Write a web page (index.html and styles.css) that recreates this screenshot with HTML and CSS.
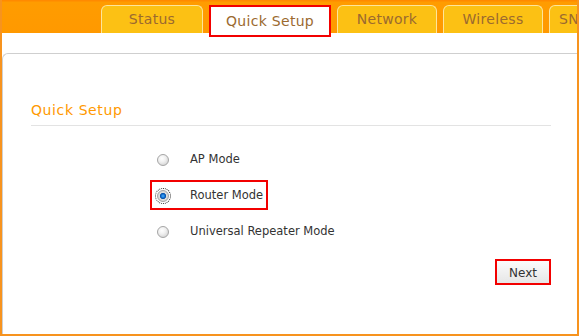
FILE: index.html
```html
<!DOCTYPE html>
<html lang="en">
<head>
    <meta charset="UTF-8">
    <meta name="viewport" content="width=device-width, initial-scale=1.0">
    <title>Quick Setup</title>
    <link rel="stylesheet" href="styles.css">
</head>
<body>
    <div class="frame">
        <div class="header">
            <div class="tab">Status</div>
            <div class="tab tab-active">Quick Setup</div>
            <div class="tab">Network</div>
            <div class="tab">Wireless</div>
            <div class="tab tab-more">SNMP</div>
        </div>

        <div class="content">
            <div class="panel">
                <h2 class="panel-title">Quick Setup</h2>

                <div class="options">
                    <label class="option">
                        <input type="radio" name="mode" value="ap">
                        <span>AP Mode</span>
                    </label>
                    <label class="option option-marked">
                        <input type="radio" name="mode" value="router" checked>
                        <span>Router Mode</span>
                    </label>
                    <label class="option">
                        <input type="radio" name="mode" value="repeater">
                        <span>Universal Repeater Mode</span>
                    </label>
                </div>

                <div class="actions">
                    <button class="next-btn">Next</button>
                </div>
            </div>
        </div>
    </div>
</body>
</html>
```

FILE: styles.css
```css
* {
    margin: 0;
    padding: 0;
    box-sizing: border-box;
    font-family: 'DejaVu Sans', Verdana, sans-serif;
}

body {
    background-color: white;
}

.frame {
    width: 579px;
    height: 336px;
    border-left: 2px solid #f7931e;
    border-right: 2px solid #f7931e;
    border-bottom: 2px solid #f7931e;
    overflow: hidden;
}

.header {
    height: 33px;
    margin-left: -2px;
    background: linear-gradient(#ff8a00 0, #ff8a00 1px, #ff9c00 2px, #ff9900 100%);
    display: flex;
    align-items: flex-start;
    gap: 6px;
    padding: 5px 0 0 101px;
    position: relative;
    z-index: 2;
}

.tab {
    flex: none;
    width: 100px;
    height: 28px;
    background-color: #fcc114;
    border: 1px solid #fde59b;
    border-bottom: none;
    border-radius: 6px 6px 0 0;
    color: #9b6a30;
    font-size: 14px;
    line-height: 27px;
    text-align: center;
    letter-spacing: 0.3px;
}

.tab:first-child {
    width: 102px;
}

.tab-active {
    width: 122px;
    height: 32px;
    background-color: white;
    border: 2px solid #f20000;
    border-radius: 0;
    line-height: 28px;
}

.tab-more {
    text-align: left;
    padding-left: 9px;
}

.content {
    padding-top: 20px;
}

.panel {
    height: 281px;
    border-top: 1px solid #cfcfcf;
    border-left: 1px solid #cfcfcf;
    border-top-left-radius: 6px;
}

.panel-title {
    margin: 47px 26px 0 28px;
    padding-bottom: 6px;
    border-bottom: 1px solid #e3e3e3;
    color: #ff9900;
    font-size: 14px;
    font-weight: normal;
    line-height: 18px;
    letter-spacing: 0.6px;
}

.options {
    margin-top: 18px;
    display: flex;
    flex-direction: column;
    gap: 6px;
}

.option {
    display: flex;
    align-items: center;
    width: fit-content;
    margin-left: 147px;
    padding: 5px 3px 5px 5px;
    border: 2px solid transparent;
    color: #333;
    font-size: 11.5px;
    line-height: 16px;
}

.option-marked {
    border-color: #f20000;
}

.option input {
    appearance: none;
    width: 12px;
    height: 12px;
    margin-right: 21px;
    margin-top: 2px;
    border: 1px solid #a5a5a5;
    border-radius: 50%;
    background: radial-gradient(circle at 40% 35%, #ffffff 0, #f0f0f0 40%, #c8c8c8 100%);
}

.option input:checked {
    background: radial-gradient(circle, #4db3ff 0, #0a64c8 30%, #0a4f9e 40%, #e0e0e0 45%, #c8c8c8 100%);
    outline: 1px dotted #222;
    outline-offset: 1px;
}

.actions {
    display: flex;
    justify-content: flex-end;
    margin: 13px 26px 0 0;
}

.next-btn {
    width: 56px;
    height: 26px;
    border: 2px solid #f20000;
    background: linear-gradient(#fbfbfb, #e6e6e6);
    color: #333;
    font-size: 12px;
    padding-top: 1px;
}
```
